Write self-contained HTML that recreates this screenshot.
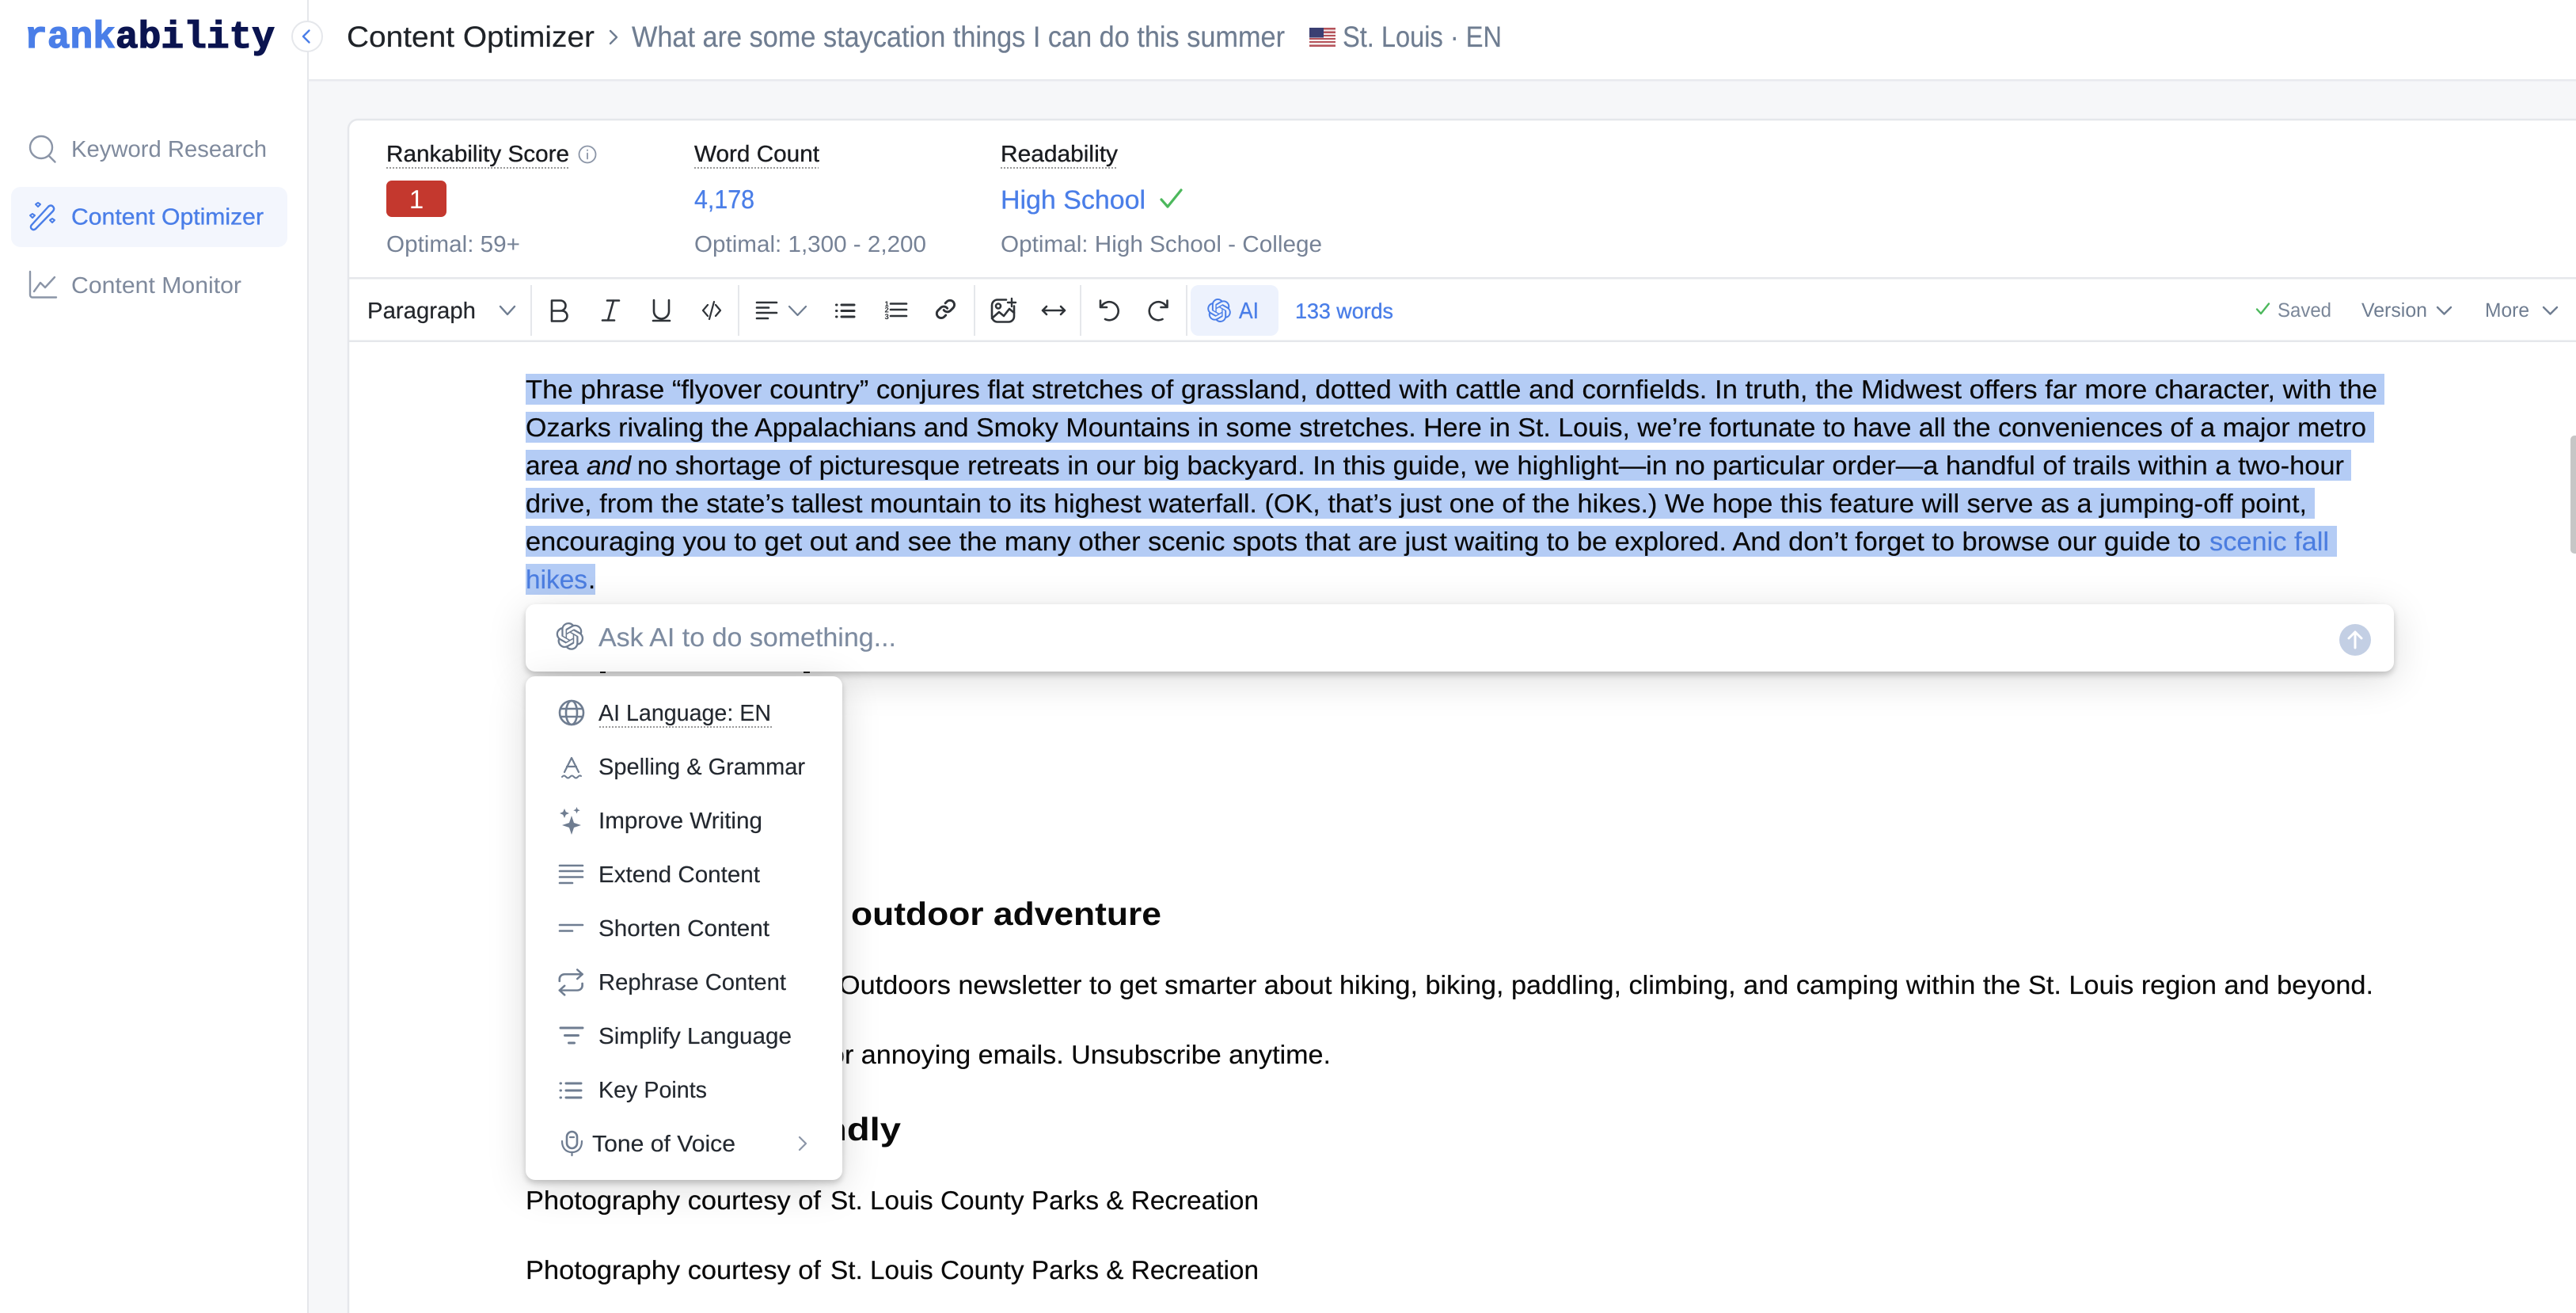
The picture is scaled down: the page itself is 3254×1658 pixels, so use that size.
<!DOCTYPE html>
<html lang="en">
<head>
<meta charset="utf-8">
<title>Content Optimizer</title>
<style>
html,body{margin:0;padding:0;width:3254px;height:1658px;overflow:hidden;background:#fff}
svg{position:absolute;left:0;top:0;display:block}
text{font-family:"Liberation Sans",Arial,sans-serif;text-rendering:geometricPrecision}
.b{font-size:33px;fill:#0a0a0a;stroke:#0a0a0a;stroke-width:.2}
.h{font-size:41px;font-weight:700;fill:#0a0a0a}
.s{font-size:29px}
.m{stroke:currentColor;stroke-width:.35}
.mi{font-size:29px;fill:#23282f;stroke:#23282f;stroke-width:.15}
.bar{font-size:37px;stroke:currentColor;stroke-width:.2}
.ic{fill:none;stroke:#2f3338;stroke-width:2.6;stroke-linecap:round;stroke-linejoin:round}
.mn{fill:none;stroke:#6f7d91;stroke-width:2.6;stroke-linecap:round;stroke-linejoin:round}
.sd{fill:none;stroke:#8b95a7;stroke-width:2.4;stroke-linecap:round;stroke-linejoin:round}
.box{position:absolute;background:#fff;border-radius:12px;box-shadow:0 4px 8px rgba(0,0,0,.2),0 10px 50px rgba(0,0,0,.14)}
</style>
</head>
<body>
<svg width="3254" height="1658" viewBox="0 0 3254 1658" xmlns="http://www.w3.org/2000/svg">
  <rect width="3254" height="1658" fill="#fff"/>
  <rect x="390" y="101" width="2864" height="1557" fill="#f6f7f9"/>
  <path d="M3270 151H452a12 12 0 0 0-12 12V1680H3270Z" fill="#fff" stroke="#e5e7eb" stroke-width="2.5"/>
  <rect x="388" y="0" width="2" height="1658" fill="#e5e7eb"/>
  <rect x="389" y="100" width="2865" height="2.5" fill="#e8eaee"/>

  <!-- logo -->
  <text x="31" y="60" font-size="48" font-weight="700" textLength="316" lengthAdjust="spacingAndGlyphs" style="font-family:'Liberation Mono',monospace" stroke-width="1.3"><tspan fill="#4a7ee8" stroke="#4a7ee8">rank</tspan><tspan fill="#0b1450" stroke="#0b1450">ability</tspan></text>

  <!-- sidebar -->
  <rect x="14" y="236" width="349" height="76" rx="12" fill="#f3f6fd"/>
  <circle cx="52" cy="186" r="14" class="sd"/><path d="M62 197l7.5 7.5" class="sd"/>
  <text x="90" y="198" class="s" fill="#7f8a9d" textLength="247" lengthAdjust="spacingAndGlyphs">Keyword Research</text>
  <g fill="none" stroke="#4a7ee8" stroke-width="2.4" stroke-linecap="round" stroke-linejoin="round">
    <path d="M40 284L61 261c2-2 4.500-2 6 0 1.500 1.500 1.500 3.500 0 5.500L45 289c-2 1.500-3.500 1.500-5 0-1.500-1.500-1.500-3.500 0-5Z"/>
    <path d="M45 258l3-2 3 2-3 3zM38 272l3-2 3 2-3 3zM63 278l3-2 3 2-3 3z" stroke-width="2"/>
  </g>
  <text x="90" y="283.500" class="s m" fill="#4a7ee8" color="#4a7ee8" textLength="243" lengthAdjust="spacingAndGlyphs">Content Optimizer</text>
  <path d="M38 343v29c0 2 1 3.500 3 3.500h30" class="sd"/><path d="M43 368l8-11 6 6 12-13" class="sd"/>
  <text x="90" y="370" class="s" fill="#7f8a9d" textLength="215" lengthAdjust="spacingAndGlyphs">Content Monitor</text>

  <!-- collapse -->
  <circle cx="388" cy="46" r="19" fill="#fff" stroke="#e5e7eb" stroke-width="2"/>
  <path d="M390.500 38.500L383 46l7.500 7.500" fill="none" stroke="#4a7ee8" stroke-width="2.4" stroke-linecap="round" stroke-linejoin="round"/>

  <!-- breadcrumb -->
  <text x="438" y="59" class="bar" fill="#1f2328" color="#1f2328" textLength="313" lengthAdjust="spacingAndGlyphs">Content Optimizer</text>
  <path d="M771 39l8 8-8 8" fill="none" stroke="#6f7d91" stroke-width="2.4" stroke-linecap="round" stroke-linejoin="round"/>
  <text x="798" y="59" class="bar" fill="#6f7d91" color="#6f7d91" textLength="825" lengthAdjust="spacingAndGlyphs">What are some staycation things I can do this summer</text>
  <g>
    <rect x="1654" y="35" width="33" height="24" fill="#f5eeee"/>
    <g fill="#b5535a">
      <rect x="1672" y="35" width="15" height="2.500"/><rect x="1672" y="39.500" width="15" height="2.500"/><rect x="1672" y="44" width="15" height="2"/>
      <rect x="1654" y="48" width="33" height="2"/><rect x="1654" y="52" width="33" height="2"/><rect x="1654" y="56.500" width="33" height="2.500"/>
    </g>
    <rect x="1654" y="35" width="18" height="12.500" fill="#3a3f72"/>
  </g>
  <text x="1696" y="59" class="bar" fill="#6f7d91" color="#6f7d91" textLength="201" lengthAdjust="spacingAndGlyphs">St. Louis · EN</text>

  <!-- metrics -->
  <g class="s" fill="#1a1c20" color="#1a1c20">
    <text x="488" y="204" class="s m" textLength="231" lengthAdjust="spacingAndGlyphs">Rankability Score</text>
    <text x="877" y="204" class="s m" textLength="158" lengthAdjust="spacingAndGlyphs">Word Count</text>
    <text x="1264" y="204" class="s m" textLength="148" lengthAdjust="spacingAndGlyphs">Readability</text>
  </g>
  <g stroke="#9b9b9b" stroke-width="2" stroke-dasharray="2 2">
    <path d="M488 212H718"/><path d="M877 212H1034"/><path d="M1264 212H1410"/>
  </g>
  <circle cx="742" cy="195" r="10.500" fill="none" stroke="#8b95a7" stroke-width="1.800"/>
  <path d="M742 193.500v7M742 189.500v.5" stroke="#8b95a7" stroke-width="1.800" stroke-linecap="round"/>
  <rect x="488" y="228" width="76" height="46" rx="7" fill="#c4382e"/>
  <text x="526" y="263" font-size="33" fill="#fff" text-anchor="middle">1</text>
  <text x="877" y="263" font-size="33" fill="#4a7ee8" stroke="#4a7ee8" stroke-width=".3" textLength="76" lengthAdjust="spacingAndGlyphs">4,178</text>
  <text x="1264" y="263.500" font-size="33" fill="#4a7ee8" stroke="#4a7ee8" stroke-width=".3" textLength="183" lengthAdjust="spacingAndGlyphs">High School</text>
  <path d="M1467 252l8 9 17-21" fill="none" stroke="#4cb85c" stroke-width="3.200" stroke-linecap="round" stroke-linejoin="round"/>
  <text x="488" y="318" class="s" fill="#768296" textLength="169" lengthAdjust="spacingAndGlyphs">Optimal: 59+</text>
  <text x="877" y="318" class="s" fill="#768296" textLength="293" lengthAdjust="spacingAndGlyphs">Optimal: 1,300 - 2,200</text>
  <text x="1264" y="318" class="s" fill="#768296" textLength="406" lengthAdjust="spacingAndGlyphs">Optimal: High School - College</text>

  <rect x="440" y="350" width="2814" height="2.500" fill="#e5e7eb"/>
  <rect x="440" y="429.500" width="2814" height="2.500" fill="#e5e7eb"/>

  <!-- toolbar -->
  <text x="464" y="402" class="s" fill="#24272c" stroke="#24272c" stroke-width=".2" textLength="137" lengthAdjust="spacingAndGlyphs">Paragraph</text>
  <path d="M632 387l9 10 9-10" fill="none" stroke="#6f7d91" stroke-width="2.400" stroke-linecap="round" stroke-linejoin="round"/>
  <g fill="#e5e7eb">
    <rect x="670" y="360" width="2" height="64"/><rect x="932" y="360" width="2" height="64"/><rect x="1230" y="360" width="2" height="64"/><rect x="1364" y="360" width="2" height="64"/><rect x="1498" y="360" width="2" height="64"/>
  </g>
  <g class="ic">
    <path d="M697 379.500h11a6.500 6.500 0 0 1 0 13h-11zM697 392.500h13a6.500 6.500 0 0 1 0 13h-13z"/>
    <path d="M767 379.500h15M761 404.500h15M775 379.500l-7 25"/>
    <path d="M826 379v14a9.500 9.500 0 0 0 19 0v-14M825 405h21"/>
    <path d="M894 385l-6 7 6 7M904 385l6 7-6 7M902 381l-6 22" stroke-width="2.200"/>
    <path d="M956 382h25M956 388.500h15M956 395h25M956 402h14"/>
    <path d="M997 387l10.500 11 10.500-11" stroke="#6f7d91" stroke-width="2.200"/>
    <path d="M1063 385h16M1063 392.500h16M1063 400h16M1056.500 385h.5M1056.500 392.500h.5M1056.500 400h.5" stroke-width="3"/>
    <path d="M1125 383.500h20M1125 391h20M1125 399h20"/>
    <g transform="translate(1181 377) scale(1.120)"><path d="M10 13a5 5 0 0 0 7.540.540l3-3a5 5 0 0 0-7.070-7.070l-1.720 1.710"/><path d="M14 11a5 5 0 0 0-7.540-.540l-3 3a5 5 0 0 0 7.070 7.070l1.710-1.710"/></g>
    <path d="M1271 378.500h-11a7 7 0 0 0-7 7v14a7 7 0 0 0 7 7h14a7 7 0 0 0 7-7v-13"/>
    <path d="M1278 377v10M1273 382h10" stroke-width="2.400"/>
    <circle cx="1261" cy="386.500" r="3"/>
    <path d="M1253 402l9-8 6 5 7-9 6 5"/>
    <path d="M1317 392h28M1322 387l-5 5 5 5M1340 387l5 5-5 5"/>
    <path d="M1390 379.500v8.500h8M1391 387.500A11.500 11.500 0 1 1 1396 403"/>
    <path d="M1474.500 379.500v8.500h-8M1473.500 387.500A11.500 11.500 0 1 0 1468.500 403"/>
  </g>
  <g font-size="9.500" font-weight="700" fill="#2f3338"><text x="1117.500" y="387">1</text><text x="1117.500" y="394.500">2</text><text x="1117.500" y="403">3</text></g>

  <rect x="1504" y="360" width="111" height="64" rx="10" fill="#edf2fd"/>
  <g transform="translate(1525 377) scale(1.250)"><path fill="#4a7ee8" d="M22.2819 9.8211a5.9847 5.9847 0 0 0-.5157-4.9108 6.0462 6.0462 0 0 0-6.5098-2.9A6.0651 6.0651 0 0 0 4.9807 4.1818a5.9847 5.9847 0 0 0-3.9977 2.9 6.0462 6.0462 0 0 0 .7427 7.0966 5.98 5.98 0 0 0 .511 4.9107 6.051 6.051 0 0 0 6.5146 2.9001A5.9847 5.9847 0 0 0 13.2599 24a6.0557 6.0557 0 0 0 5.7718-4.2058 5.9894 5.9894 0 0 0 3.9977-2.9001 6.0557 6.0557 0 0 0-.7475-7.0729zm-9.022 12.6081a4.4755 4.4755 0 0 1-2.8764-1.0408l.1419-.0804 4.7783-2.7582a.7948.7948 0 0 0 .3927-.6813v-6.7369l2.02 1.1686a.071.071 0 0 1 .038.052v5.5826a4.504 4.504 0 0 1-4.4945 4.4944zm-9.6607-4.1254a4.4708 4.4708 0 0 1-.5346-3.0137l.142.0852 4.783 2.7582a.7712.7712 0 0 0 .7806 0l5.8428-3.3685v2.3324a.0804.0804 0 0 1-.0332.0615L9.74 19.9502a4.4992 4.4992 0 0 1-6.1408-1.6464zM2.3408 7.8956a4.485 4.485 0 0 1 2.3655-1.9728V11.6a.7664.7664 0 0 0 .3879.6765l5.8144 3.3543-2.0201 1.1685a.0757.0757 0 0 1-.071 0l-4.8303-2.7865A4.504 4.504 0 0 1 2.3408 7.872zm16.5963 3.8558L13.1038 8.364 15.1192 7.2a.0757.0757 0 0 1 .071 0l4.8303 2.7913a4.4944 4.4944 0 0 1-.6765 8.1042v-5.6772a.79.79 0 0 0-.407-.667zm2.0107-3.0231l-.142-.0852-4.7735-2.7818a.7759.7759 0 0 0-.7854 0L9.409 9.2297V6.8974a.0662.0662 0 0 1 .0284-.0615l4.8303-2.7866a4.4992 4.4992 0 0 1 6.6802 4.66zM8.3065 12.863l-2.02-1.1638a.0804.0804 0 0 1-.038-.0567V6.0742a4.4992 4.4992 0 0 1 7.3757-3.4537l-.142.0805L8.704 5.459a.7948.7948 0 0 0-.3927.6813zm1.0976-2.3654l2.602-1.4998 2.6069 1.4998v2.9994l-2.5974 1.4997-2.6067-1.4997Z"/></g>
  <text x="1565" y="402" class="s" fill="#4a7ee8" stroke="#4a7ee8" stroke-width=".3" textLength="25" lengthAdjust="spacingAndGlyphs">AI</text>
  <text x="1636" y="402" font-size="27" class="m" fill="#4a7ee8" color="#4a7ee8" textLength="124" lengthAdjust="spacingAndGlyphs">133 words</text>

  <path d="M2851 390.500l5 5.500 10-12.500" fill="none" stroke="#4cb85c" stroke-width="2.400" stroke-linecap="round" stroke-linejoin="round"/>
  <text x="2877" y="400" font-size="25" fill="#7b8799" textLength="68" lengthAdjust="spacingAndGlyphs">Saved</text>
  <text x="2983" y="400" font-size="25" fill="#6f7d91" textLength="83" lengthAdjust="spacingAndGlyphs">Version</text>
  <path d="M3079 388l8.500 8.500 8.500-8.500" fill="none" stroke="#6f7d91" stroke-width="2.400" stroke-linecap="round" stroke-linejoin="round"/>
  <text x="3139" y="400" font-size="25" fill="#6f7d91" textLength="56" lengthAdjust="spacingAndGlyphs">More</text>
  <path d="M3213 388l8.500 8.500 8.500-8.500" fill="none" stroke="#6f7d91" stroke-width="2.400" stroke-linecap="round" stroke-linejoin="round"/>

  <!-- scrollbar -->
  <path d="M3254 550h-2a5 5 0 0 0-5 5v139a5 5 0 0 0 5 5h2z" fill="#c6c6c6"/>

  <!-- selection -->
  <g fill="#b4ccf5">
    <rect x="664" y="472" width="2348" height="39"/>
    <rect x="664" y="520" width="2335" height="39"/>
    <rect x="664" y="568" width="2306" height="39"/>
    <rect x="664" y="616" width="2260" height="39"/>
    <rect x="664" y="664" width="2288" height="39"/>
    <rect x="664" y="712" width="88" height="39"/>
  </g>

  <!-- body text -->
  <text x="664" y="503" class="b" textLength="2339" lengthAdjust="spacingAndGlyphs">The phrase “flyover country” conjures flat stretches of grassland, dotted with cattle and cornfields. In truth, the Midwest offers far more character, with the</text>
  <text x="664" y="551" class="b" textLength="2325" lengthAdjust="spacingAndGlyphs">Ozarks rivaling the Appalachians and Smoky Mountains in some stretches. Here in St. Louis, we’re fortunate to have all the conveniences of a major metro</text>
  <text x="664" y="599" class="b" textLength="67" lengthAdjust="spacingAndGlyphs">area</text>
  <text x="741" y="599" class="b" font-style="italic" textLength="56" lengthAdjust="spacingAndGlyphs">and</text>
  <text x="805" y="599" class="b" textLength="2156" lengthAdjust="spacingAndGlyphs">no shortage of picturesque retreats in our big backyard. In this guide, we highlight—in no particular order—a handful of trails within a two-hour</text>
  <text x="664" y="647" class="b" textLength="2250" lengthAdjust="spacingAndGlyphs">drive, from the state’s tallest mountain to its highest waterfall. (OK, that’s just one of the hikes.) We hope this feature will serve as a jumping-off point,</text>
  <text x="664" y="695" class="b" textLength="2116" lengthAdjust="spacingAndGlyphs">encouraging you to get out and see the many other scenic spots that are just waiting to be explored. And don’t forget to browse our guide to</text>
  <text x="2791" y="695" class="b" style="fill:#4b7de0;stroke:#4b7de0" textLength="151" lengthAdjust="spacingAndGlyphs">scenic fall</text>
  <text x="664" y="743" class="b" style="fill:#4b7de0;stroke:#4b7de0" textLength="78" lengthAdjust="spacingAndGlyphs">hikes</text>
  <text x="743" y="743" class="b">.</text>

  <rect x="758" y="846" width="7" height="4" fill="#222"/>
  <rect x="1015" y="846" width="8" height="4" fill="#222"/>

  <text x="1075" y="1168" class="h" textLength="392" lengthAdjust="spacingAndGlyphs">outdoor adventure</text>
  <text x="1060" y="1255" class="b" textLength="1938" lengthAdjust="spacingAndGlyphs">Outdoors newsletter to get smarter about hiking, biking, paddling, climbing, and camping within the St. Louis region and beyond.</text>
  <text x="1048" y="1343" class="b" textLength="633" lengthAdjust="spacingAndGlyphs">or annoying emails. Unsubscribe anytime.</text>
  <text x="1041" y="1440" class="h" textLength="97" lengthAdjust="spacingAndGlyphs">ndly</text>
  <text x="664" y="1527" class="b" textLength="373" lengthAdjust="spacingAndGlyphs">Photography courtesy of</text>
  <text x="1049" y="1527" class="b" textLength="541" lengthAdjust="spacingAndGlyphs">St. Louis County Parks &amp; Recreation</text>
  <text x="664" y="1615" class="b" textLength="373" lengthAdjust="spacingAndGlyphs">Photography courtesy of</text>
  <text x="1049" y="1615" class="b" textLength="541" lengthAdjust="spacingAndGlyphs">St. Louis County Parks &amp; Recreation</text>
</svg>

<div class="box" style="left:664px;top:763px;width:2360px;height:85px"></div>
<div class="box" style="left:664px;top:854px;width:400px;height:636px"></div>

<svg width="3254" height="1658" viewBox="0 0 3254 1658" xmlns="http://www.w3.org/2000/svg">
  <g transform="translate(702.500 786) scale(1.450)"><path fill="#6f7d91" d="M22.2819 9.8211a5.9847 5.9847 0 0 0-.5157-4.9108 6.0462 6.0462 0 0 0-6.5098-2.9A6.0651 6.0651 0 0 0 4.9807 4.1818a5.9847 5.9847 0 0 0-3.9977 2.9 6.0462 6.0462 0 0 0 .7427 7.0966 5.98 5.98 0 0 0 .511 4.9107 6.051 6.051 0 0 0 6.5146 2.9001A5.9847 5.9847 0 0 0 13.2599 24a6.0557 6.0557 0 0 0 5.7718-4.2058 5.9894 5.9894 0 0 0 3.9977-2.9001 6.0557 6.0557 0 0 0-.7475-7.0729zm-9.022 12.6081a4.4755 4.4755 0 0 1-2.8764-1.0408l.1419-.0804 4.7783-2.7582a.7948.7948 0 0 0 .3927-.6813v-6.7369l2.02 1.1686a.071.071 0 0 1 .038.052v5.5826a4.504 4.504 0 0 1-4.4945 4.4944zm-9.6607-4.1254a4.4708 4.4708 0 0 1-.5346-3.0137l.142.0852 4.783 2.7582a.7712.7712 0 0 0 .7806 0l5.8428-3.3685v2.3324a.0804.0804 0 0 1-.0332.0615L9.74 19.9502a4.4992 4.4992 0 0 1-6.1408-1.6464zM2.3408 7.8956a4.485 4.485 0 0 1 2.3655-1.9728V11.6a.7664.7664 0 0 0 .3879.6765l5.8144 3.3543-2.0201 1.1685a.0757.0757 0 0 1-.071 0l-4.8303-2.7865A4.504 4.504 0 0 1 2.3408 7.872zm16.5963 3.8558L13.1038 8.364 15.1192 7.2a.0757.0757 0 0 1 .071 0l4.8303 2.7913a4.4944 4.4944 0 0 1-.6765 8.1042v-5.6772a.79.79 0 0 0-.407-.667zm2.0107-3.0231l-.142-.0852-4.7735-2.7818a.7759.7759 0 0 0-.7854 0L9.409 9.2297V6.8974a.0662.0662 0 0 1 .0284-.0615l4.8303-2.7866a4.4992 4.4992 0 0 1 6.6802 4.66zM8.3065 12.863l-2.02-1.1638a.0804.0804 0 0 1-.038-.0567V6.0742a4.4992 4.4992 0 0 1 7.3757-3.4537l-.142.0805L8.704 5.459a.7948.7948 0 0 0-.3927.6813zm1.0976-2.3654l2.602-1.4998 2.6069 1.4998v2.9994l-2.5974 1.4997-2.6067-1.4997Z"/></g>
  <text x="756" y="816" font-size="33" fill="#7d8ba0" stroke="#7d8ba0" stroke-width=".15" textLength="376" lengthAdjust="spacingAndGlyphs">Ask AI to do something...</text>
  <circle cx="2975" cy="808" r="20" fill="#c3cfe4"/>
  <path d="M2975 818v-19M2967 806l8-8 8 8" fill="none" stroke="#fff" stroke-width="3" stroke-linecap="round" stroke-linejoin="round"/>

  <!-- menu items -->
  <text x="756" y="910" class="mi" textLength="218" lengthAdjust="spacingAndGlyphs">AI Language: EN</text>
  <path d="M757 918H975" stroke="#9b9b9b" stroke-width="2" stroke-dasharray="2 2"/>
  <text x="756" y="978" class="mi" textLength="261" lengthAdjust="spacingAndGlyphs">Spelling &amp; Grammar</text>
  <text x="756" y="1046" class="mi" textLength="207" lengthAdjust="spacingAndGlyphs">Improve Writing</text>
  <text x="756" y="1114" class="mi" textLength="204" lengthAdjust="spacingAndGlyphs">Extend Content</text>
  <text x="756" y="1182" class="mi" textLength="216" lengthAdjust="spacingAndGlyphs">Shorten Content</text>
  <text x="756" y="1250" class="mi" textLength="237" lengthAdjust="spacingAndGlyphs">Rephrase Content</text>
  <text x="756" y="1318" class="mi" textLength="244" lengthAdjust="spacingAndGlyphs">Simplify Language</text>
  <text x="756" y="1386" class="mi" textLength="137" lengthAdjust="spacingAndGlyphs">Key Points</text>
  <text x="748" y="1454" class="mi" textLength="181" lengthAdjust="spacingAndGlyphs">Tone of Voice</text>

  <!-- menu icons -->
  <g class="mn">
    <circle cx="722" cy="900" r="15"/>
    <ellipse cx="722" cy="900" rx="7" ry="15"/>
    <path d="M708.500 895h27M708.500 905h27"/>
    <path d="M713 975l9-18 9 18M716 968h12" stroke-width="2.200"/>
    <path d="M710 981c2-2 3-2 5 0s3 2 5 0 3-2 5 0 3 2 5 0 3-2 4-1" stroke-width="2"/>
    <path d="M707 1093h29M707 1100h29M707 1107.500h29M707 1115h16"/>
    <path d="M707 1168h29M707 1175.500h16"/>
    <g transform="translate(702 1223) scale(1.600 1.450)" stroke-width="1.650"><path d="M17 1l4 4-4 4"/><path d="M3 11V9a4 4 0 0 1 4-4h14"/><path d="M7 23l-4-4 4-4"/><path d="M21 13v2a4 4 0 0 1-4 4H3"/></g>
    <path d="M708 1298h28M713.500 1307.500h17M718.500 1317h7" stroke-width="3"/>
    <path d="M715 1368h19M715 1377h19M715 1386h19M708 1368h.5M708 1377h.5M708 1386h.5" stroke-width="3"/>
    <rect x="716" y="1429" width="13" height="21" rx="6.500"/>
    <path d="M710 1441c0 9 5 14 12.500 14s12.500-5 12.500-14M722.500 1455v4M720 1436h5" stroke-width="2.200"/>
  </g>
  <g fill="#6f7d91">
    <path d="M722 1030l3 9 9 3-9 3-3 9-3-9-9-3 9-3z"/>
    <path d="M713 1021l1.800 4.200 4.200 1.800-4.200 1.800-1.800 4.200-1.800-4.200-4.200-1.800 4.200-1.800z"/>
    <path d="M728.500 1019l1.200 3 3 1.200-3 1.200-1.200 3-1.200-3-3-1.200 3-1.200z"/>
  </g>
  <path d="M1010 1436l8 8-8 8" fill="none" stroke="#8b95a7" stroke-width="2.200" stroke-linecap="round" stroke-linejoin="round"/>
</svg>
</body>
</html>
